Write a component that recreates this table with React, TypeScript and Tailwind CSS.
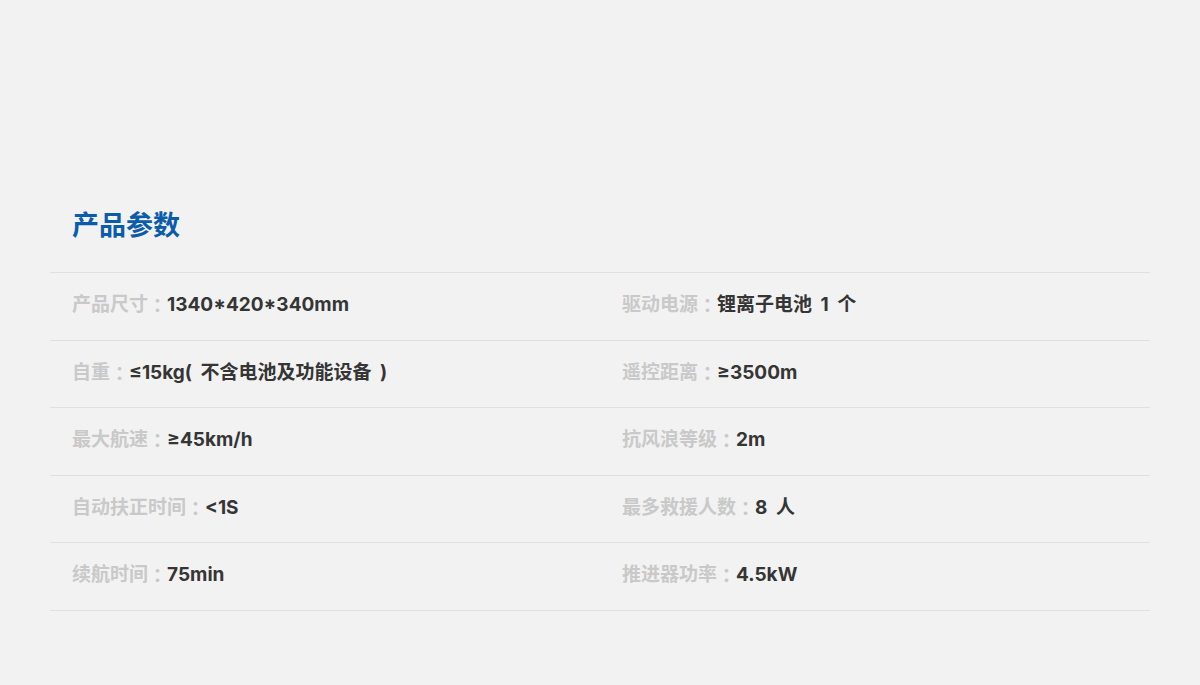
import React from "react";

const rows: [string, string, string, string][] = [
  ["产品尺寸", "1340*420*340mm", "驱动电源", "锂离子电池 1 个"],
  ["自重", "≤15kg( 不含电池及功能设备 )", "遥控距离", "≥3500m"],
  ["最大航速", "≥45km/h", "抗风浪等级", "2m"],
  ["自动扶正时间", "<1S", "最多救援人数", "8 人"],
  ["续航时间", "75min", "推进器功率", "4.5kW"],
];

function Cell({ label, value }: { label: string; value: string }) {
  return (
    <div className="flex items-center pl-[22px] pb-[2px]">
      <span className="text-[#c9c9c9] font-bold">{label}</span>
      <span
        className="text-[#c9c9c9] font-bold"
        style={{ fontFamily: '"Noto Sans CJK TC", sans-serif' }}
      >
        ：
      </span>
      <span className="text-[#353535] font-bold [word-spacing:4px] whitespace-pre">{value}</span>
    </div>
  );
}

export default function App() {
  return (
    <div
      className="w-[1200px] h-[685px] bg-[#f2f2f2] overflow-hidden"
      style={{ fontFamily: 'Inter, "Noto Sans CJK SC", sans-serif' }}
    >
      <div className="mx-[50px] pt-[204px]">
        <h2
          className="pl-[22px] text-[27px] leading-[40px] font-bold text-[#0b5cab]"
          style={{ fontFamily: '"Noto Sans CJK SC", sans-serif' }}
        >
          产品参数
        </h2>
        <div className="mt-[28px] border-t border-[#e0e0e0]">
          {rows.map((r, i) => (
            <div key={i} className="grid grid-cols-2 h-[67.6px] border-b border-[#e0e0e0] text-[19px]">
              <Cell label={r[0]} value={r[1]} />
              <Cell label={r[2]} value={r[3]} />
            </div>
          ))}
        </div>
      </div>
    </div>
  );
}
